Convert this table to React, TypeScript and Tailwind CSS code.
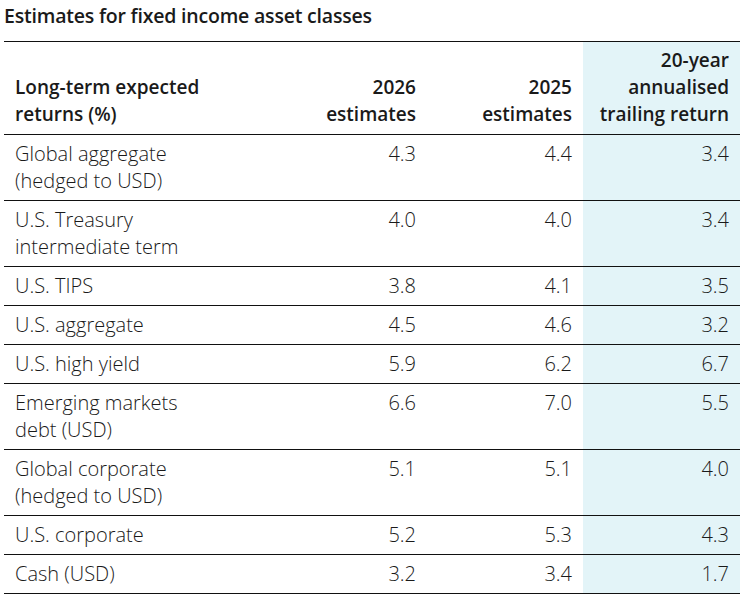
const rows: [string, string, string, string][] = [
  ["Global aggregate\n(hedged to USD)", "4.3", "4.4", "3.4"],
  ["U.S. Treasury\nintermediate term", "4.0", "4.0", "3.4"],
  ["U.S. TIPS", "3.8", "4.1", "3.5"],
  ["U.S. aggregate", "4.5", "4.6", "3.2"],
  ["U.S. high yield", "5.9", "6.2", "6.7"],
  ["Emerging markets\ndebt (USD)", "6.6", "7.0", "5.5"],
  ["Global corporate\n(hedged to USD)", "5.1", "5.1", "4.0"],
  ["U.S. corporate", "5.2", "5.3", "4.3"],
  ["Cash (USD)", "3.2", "3.4", "1.7"],
];

export default function App() {
  return (
    <div className="w-[752px] h-[598px] bg-white text-[#1a1a1a] font-['Open_Sans','Noto_Sans',sans-serif] pl-[4px] pr-[12px] pt-[4px] overflow-hidden">
      <h2 className="text-[19.5px] font-semibold leading-[23px] tracking-[-0.2px]">
        Estimates for fixed income asset classes
      </h2>
      <table className="mt-[14px] w-[736px] border-collapse text-[20px] leading-[27px] font-[350]">
        <colgroup>
          <col className="w-[267px]" />
          <col className="w-[156px]" />
          <col className="w-[156px]" />
          <col className="w-[157px]" />
        </colgroup>
        <thead>
          <tr className="border-t-[1.5px] border-b-[1.5px] border-[#111] text-[19px]">
            <th className="h-[93px] align-bottom text-left font-semibold pl-[11px] pb-[6px]">
              Long-term expected
              <br />
              returns (%)
            </th>
            <th className="align-bottom text-right font-semibold pr-[11px] pb-[6px]">
              2026
              <br />
              estimates
            </th>
            <th className="align-bottom text-right font-semibold pr-[11px] pb-[6px]">
              2025
              <br />
              estimates
            </th>
            <th className="align-bottom text-right font-semibold pr-[11px] pb-[6px] bg-[#e3f4f8]">
              20-year
              <br />
              annualised
              <br />
              trailing return
            </th>
          </tr>
        </thead>
        <tbody>
          {rows.map(([label, a, b, c]) => (
            <tr key={label} className="border-b-[1.5px] border-[#111]">
              <td className="align-top pl-[11px] pt-[5px] pb-[6px] whitespace-pre-line">{label}</td>
              <td className="align-top text-right pr-[11px] pt-[5px] pb-[6px]">{a}</td>
              <td className="align-top text-right pr-[11px] pt-[5px] pb-[6px]">{b}</td>
              <td className="align-top text-right pr-[11px] pt-[5px] pb-[6px] bg-[#e3f4f8]">{c}</td>
            </tr>
          ))}
        </tbody>
      </table>
    </div>
  );
}
